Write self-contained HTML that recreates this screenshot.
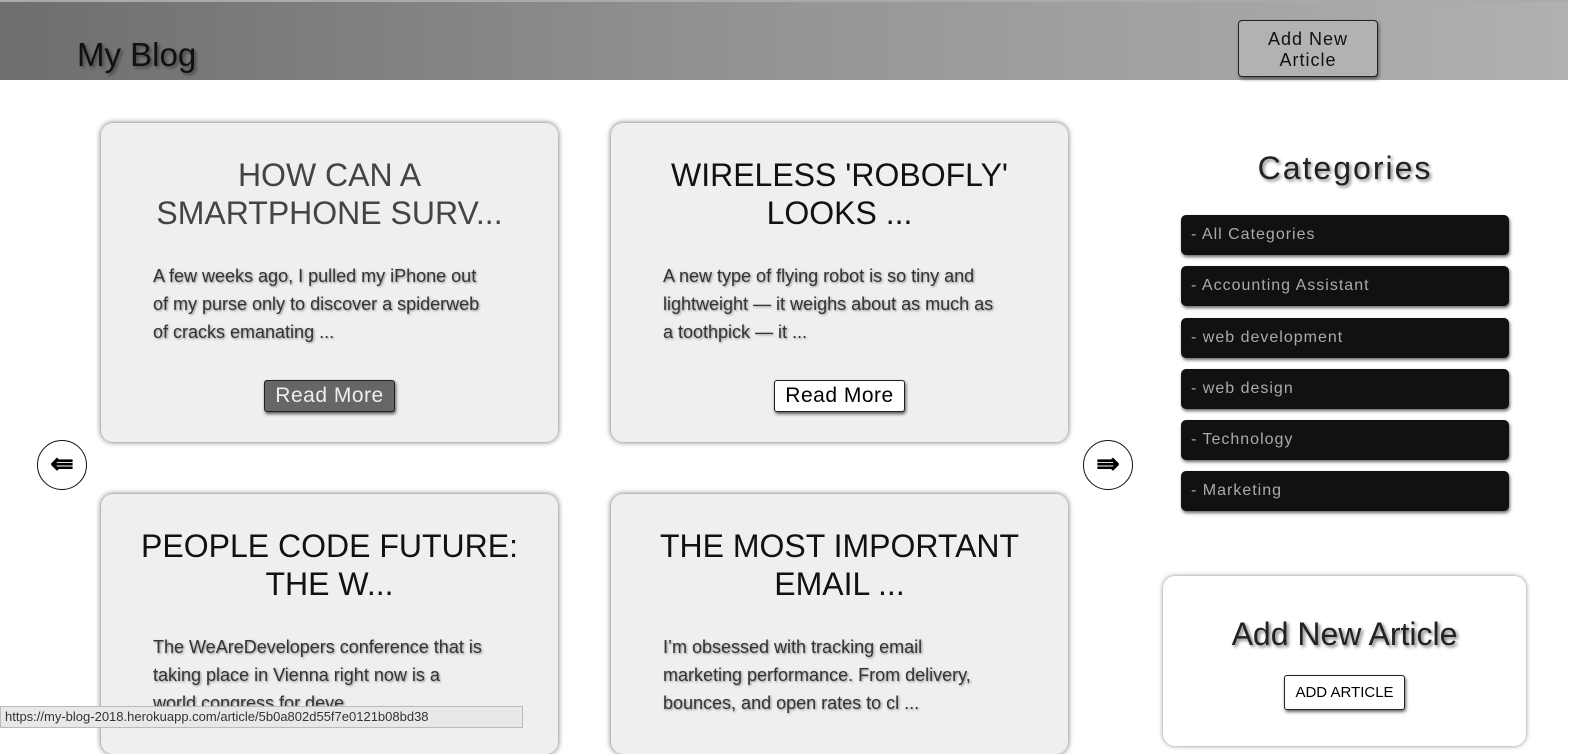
<!DOCTYPE html>
<html><head><style>
*{margin:0;padding:0;box-sizing:border-box}
body{width:1584px;height:735px;overflow:hidden;background:#fff;font-family:"Liberation Sans",sans-serif;position:relative}
.hdr{position:absolute;left:0;top:0;width:1568px;height:80px;background:linear-gradient(90deg,#6e6e6e,#959595 50%,#b0b0b0);border-top:2px solid #aaa}
.logo{position:absolute;left:77px;top:34px;font-size:33px;color:#111;text-shadow:2px 2px 3px #444}
.hbtn{position:absolute;left:1238px;top:18px;width:140px;height:57px;border:1px solid #222;border-radius:4px;background:#b2b2b2;text-align:center;font-size:18px;line-height:21px;letter-spacing:1px;padding-top:8px;color:#111;box-shadow:1px 2px 3px #555}
.card{position:absolute;width:457px;background:#efefef;border-radius:12px;box-shadow:0 0 6px #666;text-align:center}
.card h2{font-weight:normal;font-size:32px;line-height:38px;margin:33px 25px 0;color:#111;letter-spacing:0}
.card p{text-align:left;margin:30px 72px 0 52px;font-size:18px;line-height:28px;color:#333;text-shadow:1px 1px 2px #888}
.rb{display:inline-block;margin-top:34px;padding:3px 10px;font-size:21px;border:1px solid #222;border-radius:3px;background:#fff;box-shadow:1px 2px 3px #555;letter-spacing:0.5px}
.arr{position:absolute;width:50px;height:50px;border:1px solid #111;border-radius:50%;background:#fff;text-align:center;line-height:46px;font-size:28px;font-weight:bold}
.cat{position:absolute;left:1181px;width:328px;height:40px;background:#111;border-radius:5px;color:#aaa;font-size:16px;line-height:40px;padding-left:10px;letter-spacing:1px;box-shadow:1px 2px 3px #666}
.ct{position:absolute;left:1180px;width:330px;top:150px;text-align:center;font-size:32px;letter-spacing:2px;color:#222;text-shadow:2px 2px 3px #888}
.add{position:absolute;left:1163px;top:576px;width:363px;height:170px;border-radius:12px;box-shadow:0 0 5px #888;background:#fff;text-align:center}
.status{position:absolute;left:0;top:706px;width:523px;height:22px;background:#e8e8e8;border:1px solid #bbb;font-size:13px;line-height:20px;padding-left:4px;color:#333}
</style></head><body>
<div class="hdr"><div class="logo">My Blog</div><div class="hbtn">Add New<br>Article</div></div>
<div class="card" style="left:101px;top:123px;height:319px"><h2 style="color:#444">HOW CAN A SMARTPHONE SURV...</h2><p>A few weeks ago, I pulled my iPhone out of my purse only to discover a spiderweb of cracks emanating ...</p><span class="rb" style="background:#666;color:#eee">Read More</span></div>
<div class="card" style="left:611px;top:123px;height:319px"><h2>WIRELESS 'ROBOFLY' LOOKS ...</h2><p>A new type of flying robot is so tiny and lightweight — it weighs about as much as a toothpick — it ...</p><span class="rb">Read More</span></div>
<div class="card" style="left:101px;top:494px;height:260px"><h2 style="margin:33px 15px 0">PEOPLE CODE FUTURE: THE W...</h2><p>The WeAreDevelopers conference that is taking place in Vienna right now is a world congress for deve ...</p></div>
<div class="card" style="left:611px;top:494px;height:260px"><h2>THE MOST IMPORTANT EMAIL ...</h2><p>I’m obsessed with tracking email marketing performance. From delivery, bounces, and open rates to cl ...</p></div>
<div class="arr" style="left:37px;top:440px">⇚</div>
<div class="arr" style="left:1083px;top:440px">⇛</div>
<div class="ct">Categories</div>
<div class="cat" style="top:215px">- All Categories</div>
<div class="cat" style="top:266px">- Accounting Assistant</div>
<div class="cat" style="top:318px">- web development</div>
<div class="cat" style="top:369px">- web design</div>
<div class="cat" style="top:420px">- Technology</div>
<div class="cat" style="top:471px">- Marketing</div>
<div class="add"><div style="font-size:32px;margin-top:40px;color:#222;text-shadow:2px 2px 3px #777">Add New Article</div><span style="display:inline-block;margin-top:22px;border:1px solid #222;border-radius:3px;padding:8px 10px;font-size:15px;box-shadow:1px 2px 3px #666">ADD ARTICLE</span></div>
<div class="status">https://my-blog-2018.herokuapp.com/article/5b0a802d55f7e0121b08bd38</div>
</body></html>
